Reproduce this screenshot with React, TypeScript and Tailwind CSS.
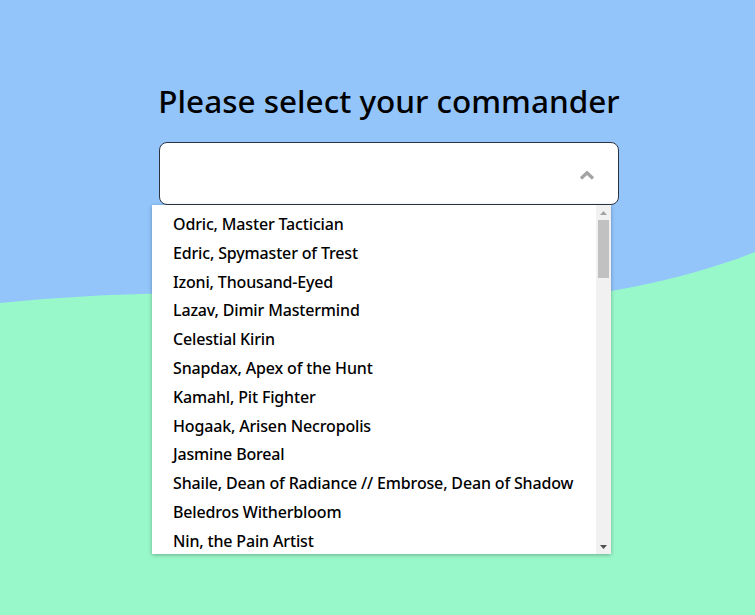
import React, { useState } from 'react';

const commanders = [
  'Odric, Master Tactician',
  'Edric, Spymaster of Trest',
  'Izoni, Thousand-Eyed',
  'Lazav, Dimir Mastermind',
  'Celestial Kirin',
  'Snapdax, Apex of the Hunt',
  'Kamahl, Pit Fighter',
  'Hogaak, Arisen Necropolis',
  'Jasmine Boreal',
  'Shaile, Dean of Radiance // Embrose, Dean of Shadow',
  'Beledros Witherbloom',
  'Nin, the Pain Artist',
];

const Wave: React.FC = () => (
  <svg
    className="absolute inset-0 h-full w-full"
    viewBox="0 0 755 615"
    preserveAspectRatio="none"
  >
    <rect x="0" y="0" width="755" height="615" fill="#93c5fb" />
    <path
      d="M0 303 Q 200 283 420 302 C 520 311 660 290 755 252 L 755 615 L 0 615 Z"
      fill="#99f8ca"
    />
  </svg>
);

// classic chromium-like scrollbar, drawn by hand
const ScrollBar: React.FC = () => (
  <div className="flex w-[15px] shrink-0 flex-col bg-[#f1f1f1]">
    <div className="flex h-[15px] items-center justify-center">
      <svg width="7" height="4" viewBox="0 0 7 4">
        <path d="M0 4 L3.5 0 L7 4 Z" fill="#a3a3a3" />
      </svg>
    </div>
    <div className="mx-[2px] h-[58px] bg-[#c1c1c1]" />
    <div className="flex-1" />
    <div className="flex h-[15px] items-center justify-center">
      <svg width="7" height="4" viewBox="0 0 7 4">
        <path d="M0 0 L7 0 L3.5 4 Z" fill="#505050" />
      </svg>
    </div>
  </div>
);

const App: React.FC = () => {
  const [selected, setSelected] = useState('');

  return (
    <div
      className="relative h-[615px] w-full overflow-hidden"
      style={{ fontFamily: '"Noto Sans", "Open Sans", sans-serif' }}
    >
      <Wave />
      <div className="relative flex flex-col items-center pl-[23px] pt-[78px]">
        <h1 className="text-[31.5px] font-medium leading-[46px] text-black">
          Please select your commander
        </h1>
        <div className="relative mt-[18px] w-[460px]">
          <button
            type="button"
            className="flex h-[63px] w-full items-center justify-end rounded-lg border border-[#2c3444] bg-white pr-[22px]"
          >
            <span className="text-left text-[16px]">{selected}</span>
            <svg width="18" height="12" viewBox="0 0 18 12" className="mt-[2px]">
              <path d="M3 9.5 L9 3.8 L15 9.5" fill="none" stroke="#a3a3a3" strokeWidth="3.2" />
            </svg>
          </button>
          <div className="absolute left-[-7px] top-[63px] flex h-[349px] w-[459px] bg-white shadow-[0_1px_4px_rgba(0,0,0,0.3)]">
            <ul className="flex-1 overflow-hidden pt-[5px]">
              {commanders.map((name) => (
                <li
                  key={name}
                  onClick={() => setSelected(name)}
                  className="cursor-pointer whitespace-nowrap pl-[21px] text-[16px] font-medium leading-[28.8px] tracking-[-0.16px] text-black"
                >
                  {name}
                </li>
              ))}
            </ul>
            <ScrollBar />
          </div>
        </div>
      </div>
    </div>
  );
};

export default App;
